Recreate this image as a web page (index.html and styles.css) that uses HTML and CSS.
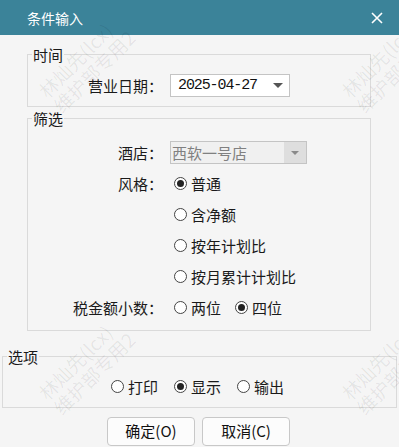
FILE: index.html
```html
<!DOCTYPE html>
<html lang="zh-CN">
<head>
  <meta charset="UTF-8">
  <meta name="viewport" content="width=device-width, initial-scale=1.0">
  <title>条件输入</title>
  <link rel="stylesheet" href="styles.css">
</head>
<body>
  <div class="dialog">
    <div class="titlebar">
      <span class="title">条件输入</span>
      <svg class="close" width="12" height="12" viewBox="0 0 12 12">
        <path d="M1 1 L11 11 M11 1 L1 11" stroke="#fff" stroke-width="1.6" fill="none"/>
      </svg>
    </div>

    <div class="content">
      <fieldset class="group group-time">
        <legend>时间</legend>
        <div class="row">
          <span class="label">营业日期：</span>
          <div class="combo combo-date">
            <span class="value">2025-04-27</span>
            <span class="arrow"></span>
          </div>
        </div>
      </fieldset>

      <fieldset class="group group-filter">
        <legend>筛选</legend>
        <div class="row">
          <span class="label">酒店：</span>
          <div class="combo combo-disabled">
            <span class="value">西软一号店</span>
            <span class="btn"><span class="arrow"></span></span>
          </div>
        </div>
        <div class="row">
          <span class="label">风格：</span>
          <span class="radio checked"><span class="circle"></span>普通</span>
        </div>
        <div class="row">
          <span class="label"></span>
          <span class="radio"><span class="circle"></span>含净额</span>
        </div>
        <div class="row">
          <span class="label"></span>
          <span class="radio"><span class="circle"></span>按年计划比</span>
        </div>
        <div class="row">
          <span class="label"></span>
          <span class="radio"><span class="circle"></span>按月累计计划比</span>
        </div>
        <div class="row">
          <span class="label">税金额小数：</span>
          <span class="radio"><span class="circle"></span>两位</span>
          <span class="radio checked"><span class="circle"></span>四位</span>
        </div>
      </fieldset>

      <fieldset class="group group-options">
        <legend>选项</legend>
        <div class="options">
          <span class="radio"><span class="circle"></span>打印</span>
          <span class="radio checked"><span class="circle"></span>显示</span>
          <span class="radio"><span class="circle"></span>输出</span>
        </div>
      </fieldset>

      <div class="buttons">
        <button type="button">确定(O)</button>
        <button type="button">取消(C)</button>
      </div>
    </div>

    <div class="watermark">
      <div class="wm wm-1">林灿先(lcx)<br>维护部专用2</div>
      <div class="wm wm-2">林灿先(lcx)<br>维护部专用2</div>
      <div class="wm wm-3">林灿先(lcx)<br>维护部专用2</div>
      <div class="wm wm-4">林灿先(lcx)<br>维护部专用2</div>
    </div>
  </div>
</body>
</html>
```

FILE: styles.css
```css
body {
  margin: 0;
  font-family: "Noto Sans CJK SC", "Noto Sans", sans-serif;
  font-size: 15px;
  color: #1a1a1a;
}

.dialog {
  position: relative;
  width: 399px;
  height: 447px;
  overflow: hidden;
  background-color: #f5f5f5;
}

.titlebar {
  display: flex;
  align-items: center;
  justify-content: space-between;
  height: 35px;
  padding: 0 16px 0 27px;
  background-color: #3b8399;
  color: #fff;
  font-size: 14px;
}

.close {
  display: block;
}

.content {
  display: flex;
  flex-direction: column;
}

.group {
  min-width: 0;
  margin: 0;
  border: 1px solid #dadada;
  padding: 0;
}

.group legend {
  margin-left: 4px;
  padding: 0 1px;
  font-size: 15px;
  line-height: 17px;
}

.group-time {
  margin: 11px 28px 0 27px;
  padding: 11px 0 9px;
}

.group-filter {
  margin: 3px 28px 0 27px;
  padding: 10px 0 7px;
}

.group-options {
  margin: 17px 2px 0 2px;
  padding: 6px 0 5px;
}

.row {
  display: flex;
  align-items: center;
  height: 31px;
}

.group-time .row {
  height: 23px;
}

.label {
  flex: none;
  width: 135px;
  text-align: right;
  margin-right: 7px;
}

.combo {
  position: relative;
  display: flex;
  align-items: center;
  height: 23px;
  box-sizing: border-box;
  border: 1px solid #c4c4c4;
}

.combo-date {
  width: 120px;
  padding-left: 7px;
  background-color: #fff;
}

.combo-date .value {
  font-family: "Liberation Mono", monospace;
  font-size: 15px;
  letter-spacing: -1.1px;
  color: #111;
}

.combo-date .arrow {
  margin-left: auto;
  margin-right: 6px;
  border-left: 5px solid transparent;
  border-right: 5px solid transparent;
  border-top: 5px solid #555;
}

.combo-disabled {
  width: 137px;
  background-color: #f0f0f0;
  color: #808080;
}

.combo-disabled .value {
  padding-left: 1px;
}

.combo-disabled .btn {
  display: flex;
  align-items: center;
  justify-content: center;
  margin-left: auto;
  width: 22px;
  height: 100%;
  background-color: #dedede;
}

.combo-disabled .arrow {
  border-left: 4px solid transparent;
  border-right: 4px solid transparent;
  border-top: 4px solid #8a8a8a;
}

.radio {
  display: inline-flex;
  align-items: center;
  gap: 4px;
  margin-left: 4px;
  margin-right: 10px;
}

.circle {
  position: relative;
  width: 13px;
  height: 13px;
  box-sizing: border-box;
  border: 1px solid #444;
  border-radius: 50%;
  background-color: #fff;
}

.radio.checked .circle::after {
  content: "";
  position: absolute;
  left: 2px;
  top: 2px;
  width: 7px;
  height: 7px;
  border-radius: 50%;
  background-color: #222;
}

.options {
  display: flex;
  justify-content: center;
  align-items: center;
  height: 31px;
  padding-right: 4px;
}

.options .radio {
  margin: 0 8px;
}

.buttons {
  display: flex;
  justify-content: center;
  gap: 7px;
  margin-top: 9px;
  padding-right: 2px;
}

.buttons button {
  width: 88px;
  height: 29px;
  border: 1px solid #c8c8c8;
  border-radius: 4px;
  background-color: #fcfcfc;
  font-family: "Noto Sans CJK SC", "Noto Sans", sans-serif;
  font-size: 15px;
  color: #111;
  padding: 0 0 2px;
}

.watermark {
  position: absolute;
  inset: 0;
  pointer-events: none;
}

.wm {
  position: absolute;
  transform: rotate(-45deg);
  transform-origin: 0 0;
  font-size: 19px;
  line-height: 21px;
  white-space: nowrap;
  color: rgba(0, 0, 0, 0.07);
}

.wm-1 { left: 34px; top: 86px; }
.wm-2 { left: 337px; top: 86px; }
.wm-3 { left: 34px; top: 388px; }
.wm-4 { left: 337px; top: 388px; }
```
